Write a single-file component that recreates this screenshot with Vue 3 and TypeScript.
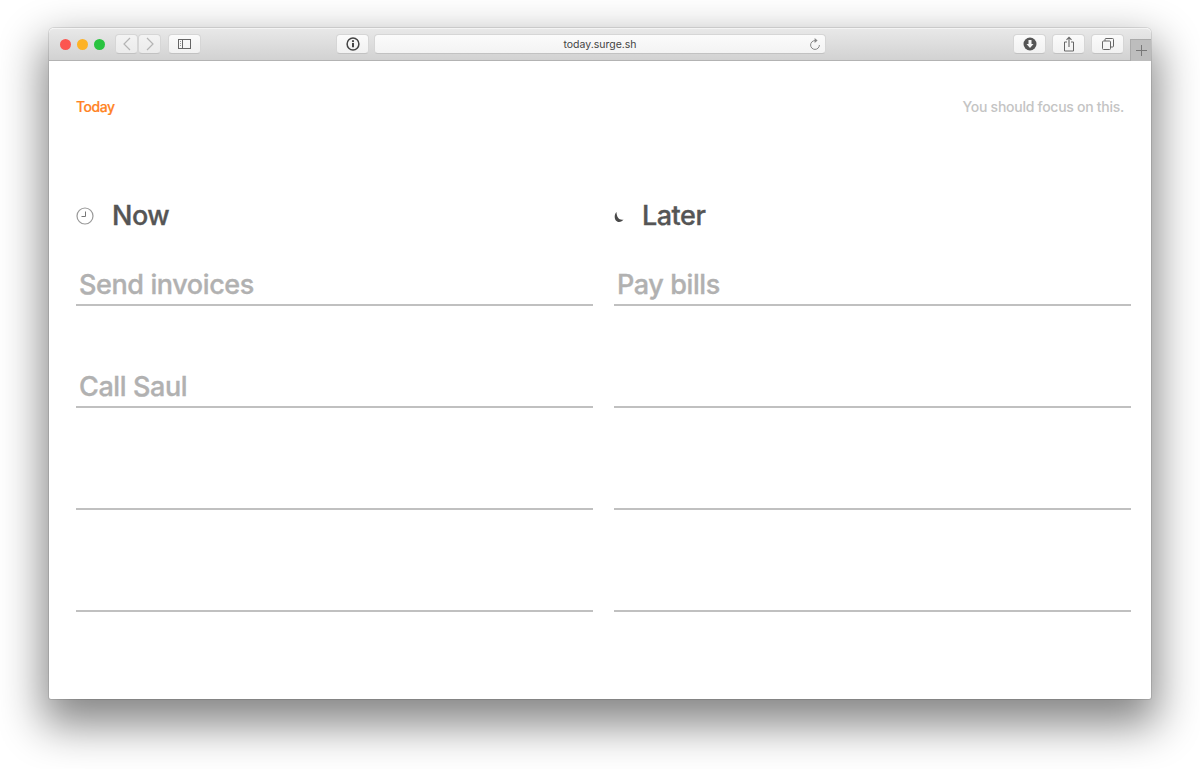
<script setup lang="ts">
const columns = [
  { title: 'Now', kind: 'now', items: ['Send invoices', 'Call Saul', '', ''] },
  { title: 'Later', kind: 'later', items: ['Pay bills', '', '', ''] },
]
</script>

<template>
  <div class="page">
    <div class="window">
      <div class="toolbar">
        <div class="left-controls">
          <div class="lights">
            <span class="light red"></span>
            <span class="light yellow"></span>
            <span class="light green"></span>
          </div>
          <div class="nav">
            <button class="btn nav-btn">
              <svg width="8" height="14" viewBox="0 0 8 14"><path d="M7 1 1 7l6 6" fill="none" stroke="#b4b4b4" stroke-width="1.2" /></svg>
            </button>
            <button class="btn nav-btn">
              <svg width="8" height="14" viewBox="0 0 8 14"><path d="m1 1 6 6-6 6" fill="none" stroke="#b4b4b4" stroke-width="1.2" /></svg>
            </button>
          </div>
          <button class="btn sidebar-btn">
            <svg width="13" height="10" viewBox="0 0 13 10"><rect x=".5" y=".5" width="12" height="9" fill="none" stroke="#666" /><path d="M4.500 0v10" stroke="#666" /><path d="M2 2.500h1M2 4.500h1M2 6.500h1" stroke="#999" /></svg>
          </button>
        </div>
        <div class="center-controls">
          <button class="btn info-btn">
            <svg width="14" height="14" viewBox="0 0 14 14"><circle cx="7" cy="7" r="5.900" fill="none" stroke="#444" stroke-width="1.500" /><circle cx="7" cy="4.200" r="1.100" fill="#444" /><path d="M7 6v4.200" stroke="#444" stroke-width="2" /></svg>
          </button>
          <div class="address">
            <span class="url">today.surge.sh</span>
            <svg class="reload" width="12" height="13" viewBox="0 0 12 13"><path d="M6 2.600a4.400 4.400 0 1 0 4.400 4.400" fill="none" stroke="#888" stroke-width="1" /><path d="M5.600 0v5l3-2.500z" fill="#888" /></svg>
          </div>
        </div>
        <div class="right-controls">
          <button class="btn tool-btn">
            <svg width="14" height="14" viewBox="0 0 14 14"><circle cx="7" cy="7" r="6.500" fill="#555" /><path d="M5.500 3h3v4h2L7 11 3.500 7h2z" fill="#f6f6f6" /></svg>
          </button>
          <button class="btn tool-btn">
            <svg width="12" height="16" viewBox="0 0 12 16"><path d="M4 6H1.500v9h9V6H8" fill="none" stroke="#666" /><path d="M6 11V1.500M3.500 3.800 6 1.300l2.500 2.500" fill="none" stroke="#666" stroke-width="1.100" /></svg>
          </button>
          <button class="btn tool-btn">
            <svg width="12" height="12" viewBox="0 0 12 12"><rect x=".5" y="3" width="8" height="8.500" rx="1" fill="none" stroke="#666" /><path d="M3 3V1.500a1 1 0 0 1 1-1h6.500a1 1 0 0 1 1 1V8a1 1 0 0 1-1 1H8.500" fill="none" stroke="#666" /></svg>
          </button>
          <div class="new-tab">
            <svg width="11" height="11" viewBox="0 0 11 11"><path d="M5.500 0v11M0 5.500h11" stroke="#777" /></svg>
          </div>
        </div>
      </div>

      <div class="content">
        <header class="app-header">
          <span class="brand">Today</span>
          <span class="tagline">You should focus on this.</span>
        </header>
        <main class="columns">
          <section v-for="col in columns" :key="col.title" class="column" :class="col.kind">
            <h2 class="heading">
              <svg v-if="col.kind === 'now'" class="icon" width="18" height="18" viewBox="0 0 18 18">
                <circle cx="9" cy="9" r="8" fill="none" stroke="#999" stroke-width="1.200" />
                <path d="M9.500 4.500v5H5.500" fill="none" stroke="#777" />
              </svg>
              <svg v-else class="icon" width="18" height="18" viewBox="0 0 18 18">
                <path d="M2.500 5C-1 9 1 15 5 15c2 0 3.500-1 4.500-2.500C6 13.500 2.500 11 2.500 5z" fill="#4a4a4a" />
              </svg>
              {{ col.title }}
            </h2>
            <div v-for="(item, i) in col.items" :key="i" class="row">{{ item }}</div>
          </section>
        </main>
      </div>
    </div>
  </div>
</template>

<style>
html,
body {
  margin: 0;
  background: #fff;
}
</style>

<style scoped>
.page {
  height: 769px;
  box-sizing: border-box;
  padding: 28px 49px 0;
  overflow: hidden;
  font-family: Inter, "Liberation Sans", sans-serif;
}
.window {
  height: 671px;
  background: #fff;
  border-radius: 5px 5px 2px 2px;
  box-shadow: 0 0 0 1px rgba(0, 0, 0, 0.1), 0 20px 44px 6px rgba(0, 0, 0, 0.48);
  display: flex;
  flex-direction: column;
}
.toolbar {
  height: 33px;
  box-sizing: border-box;
  padding-bottom: 1px;
  background: linear-gradient(#e8e8e8, #d2d2d2);
  border-top: 1px solid #f4f4f4;
  border-bottom: 1px solid #b3b3b3;
  border-radius: 5px 5px 0 0;
  display: grid;
  grid-template-columns: 287px 1fr 320px;
  align-items: center;
}
.left-controls,
.center-controls,
.right-controls {
  display: flex;
  align-items: center;
}
.left-controls {
  padding-left: 11px;
}
.lights {
  display: flex;
  gap: 6px;
  margin-right: 10px;
}
.light {
  width: 11px;
  height: 11px;
  border-radius: 50%;
}
.red { background: #fc5650; }
.yellow { background: #fdb225; }
.green { background: #29c33f; }
.btn {
  display: flex;
  align-items: center;
  justify-content: center;
  height: 20px;
  padding: 0;
  background: linear-gradient(#fbfbfb, #f1f1f1);
  border: 1px solid #d6d6d6;
  border-bottom-color: #c2c2c2;
  border-radius: 4px;
  box-sizing: border-box;
}
.nav {
  display: flex;
  margin-right: 7px;
}
.nav-btn {
  width: 23px;
  background: linear-gradient(#f3f3f3, #ebebeb);
}
.sidebar-btn {
  width: 33px;
}
.center-controls {
  gap: 5px;
}
.info-btn {
  width: 33px;
  flex: none;
}
.address {
  position: relative;
  width: 452px;
  height: 20px;
  box-sizing: border-box;
  display: flex;
  align-items: center;
  justify-content: center;
  background: linear-gradient(#fbfbfb, #f3f3f3);
  border: 1px solid #d6d6d6;
  border-bottom-color: #c2c2c2;
  border-radius: 4px;
}
.url {
  font-size: 10.5px;
  color: #444;
}
.reload {
  position: absolute;
  right: 4px;
  top: 3px;
}
.right-controls {
  justify-content: flex-end;
  gap: 6px;
  position: relative;
  padding-right: 27px;
}
.tool-btn {
  width: 33px;
}
.new-tab {
  position: absolute;
  right: 0;
  top: 5px;
  width: 21px;
  height: 22px;
  background: #bdbdbd;
  border-left: 1px solid #aaa;
  border-top: 1px solid #aaa;
  box-sizing: border-box;
  display: flex;
  align-items: center;
  justify-content: center;
}
.content {
  flex: 1;
  padding: 0 20px 0 27px;
}
.app-header {
  display: flex;
  justify-content: space-between;
  align-items: center;
  height: 20px;
  margin-top: 35px;
  padding-right: 7px;
  font-size: 14px;
}
.brand {
  color: #ff8324;
  font-weight: 500;
  letter-spacing: -0.5px;
  -webkit-text-stroke: 0.2px #ff8324;
}
.tagline {
  color: #c4c4c4;
  font-weight: 500;
  letter-spacing: -0.27px;
}
.columns {
  display: grid;
  grid-template-columns: 517px 517px;
  column-gap: 21px;
  margin-top: 80px;
}
.heading {
  display: flex;
  align-items: center;
  height: 38px;
  margin: 0;
  font-size: 27px;
  font-weight: 500;
  color: #555;
  letter-spacing: -0.5px;
  -webkit-text-stroke: 0.35px #555;
}
.icon {
  flex: none;
  margin-top: 2px;
}
.now .icon {
  margin-right: 18px;
}
.later .icon {
  margin-right: 10px;
}
.row {
  box-sizing: border-box;
  height: 102px;
  display: flex;
  align-items: flex-end;
  padding: 0 0 1px 3px;
  line-height: 40px;
  font-size: 27px;
  font-weight: 500;
  color: #b1b1b1;
  letter-spacing: -0.4px;
  -webkit-text-stroke: 0.35px #b1b1b1;
  position: relative;
}
.row::after {
  content: "";
  position: absolute;
  left: 0;
  right: 0;
  bottom: 0;
  height: 2px;
  background: #c0c0c0;
}
.row:first-of-type {
  height: 72px;
}
</style>
